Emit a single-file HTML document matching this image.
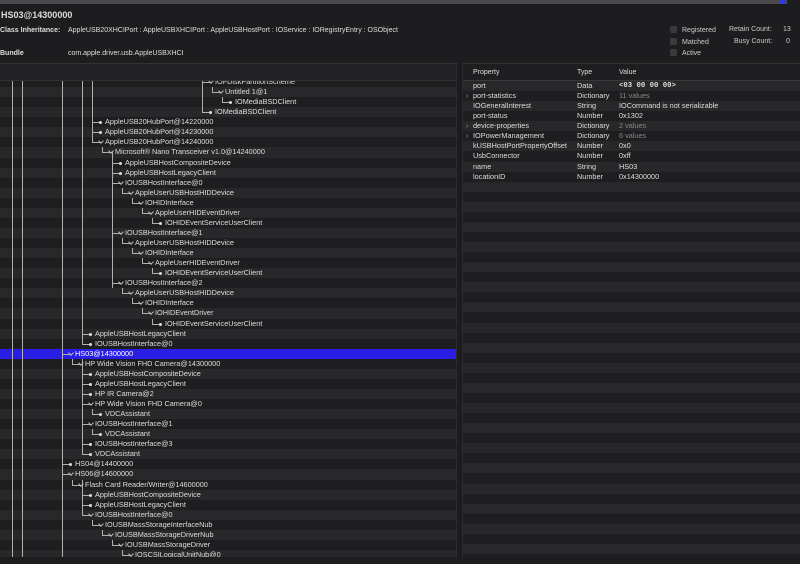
<!DOCTYPE html>
<html><head><meta charset="utf-8"><style>
*{margin:0;padding:0;box-sizing:border-box}
body{width:800px;height:557px;background:#1d1d1f;font-family:"Liberation Sans",sans-serif;color:#dedede;overflow:hidden;position:relative}
.top{position:absolute;left:0;top:0;width:787px;height:4px;background:#4a4a4c}
.top i{position:absolute;right:2px;top:0;width:6px;height:4px;background:#2a3ae8;border-radius:2px}
.h{position:absolute;font-size:9px;font-weight:bold;left:1px;top:10px}
.ci{position:absolute;font-size:7px;top:27px;left:0}
.ci b,.bu b{display:inline-block;width:68px}
.bu{position:absolute;font-size:7px;top:50px;left:0}
.st{position:absolute;font-size:7px;color:#ccc}
.cb{display:inline-block;width:7px;height:7px;background:#3a3a3c;border-radius:1px;margin-right:5px;vertical-align:-1px}
#left{position:absolute;left:0;top:63px;width:456px;height:494px;background:#222224;border-top:1px solid #333;overflow:hidden}
#lh{position:absolute;left:0;top:0;width:456px;height:17px;background:#222224;border-bottom:1px solid #333;z-index:2}
#tree{position:absolute;left:0;top:13px;width:456px}
.r{height:10.07px;line-height:10px;font-size:7.3px;position:relative;white-space:nowrap;padding-left:calc(75px + var(--d)*10px)}
.r:nth-child(odd){background:#1e1e20}
.r:nth-child(even){background:#28282a}
.r::before{content:"";position:absolute;left:calc(62px + var(--d)*10px);top:0;width:8px;height:5px;border-left:1px solid #b0b0b0;border-bottom:1px solid #b0b0b0}
.l::after{content:"";position:absolute;left:calc(69px + var(--d)*10px);top:4px;width:3px;height:3px;border-radius:50%;background:#ddd}
.e::after{content:"";position:absolute;left:calc(69px + var(--d)*10px);top:2px;width:3px;height:3px;border-right:1px solid #bbb;border-bottom:1px solid #bbb;transform:rotate(45deg)}
.r.sel{background:#2a1de6!important;color:#fff}
.v{position:absolute;width:1px;background:#b0b0b0}
#div{position:absolute;left:456px;top:63px;width:7px;height:494px;background:#1c1c1e;border-left:1px solid #2c2c2e;border-right:1px solid #2c2c2e}
#right{position:absolute;left:463px;top:63px;width:337px;height:494px;background:#1e1e20;border-top:1px solid #333}
.th{height:17px;font-size:7px;line-height:17px;position:relative;border-bottom:1px solid #3a3a3c;background:#1e1e20}
.th span,.pr span{position:absolute}
.pr{height:10.07px;line-height:10px;font-size:7.3px;position:relative}
.pr:nth-child(odd){background:#28282a}
.gr{color:#888}
</style></head><body>
<div class="top"><i></i></div>
<div class="h">HS03@14300000</div>
<div class="ci"><b>Class Inheritance:</b>AppleUSB20XHCIPort : AppleUSBXHCIPort : AppleUSBHostPort : IOService : IORegistryEntry : OSObject</div>
<div class="bu"><b>Bundle</b>com.apple.driver.usb.AppleUSBXHCI</div>
<div class="st" style="left:670px;top:26px"><span class="cb"></span>Registered</div>
<div class="st" style="left:670px;top:38px"><span class="cb"></span>Matched</div>
<div class="st" style="left:670px;top:49px"><span class="cb"></span>Active</div>
<div class="st" style="left:729px;top:26px">Retain Count:</div>
<div class="st" style="left:734px;top:38px">Busy Count:</div>
<div class="st" style="left:783px;top:26px">13</div>
<div class="st" style="left:786px;top:38px">0</div>

<div id="left">
<div id="lh"></div>
<div id="tree">
<div class="r e" style="--d:14">IOFDiskPartitionScheme</div>
<div class="r e" style="--d:15">Untitled 1@1</div>
<div class="r l" style="--d:16">IOMediaBSDClient</div>
<div class="r l" style="--d:14">IOMediaBSDClient</div>
<div class="r l" style="--d:3">AppleUSB20HubPort@14220000</div>
<div class="r l" style="--d:3">AppleUSB20HubPort@14230000</div>
<div class="r e" style="--d:3">AppleUSB20HubPort@14240000</div>
<div class="r e" style="--d:4">Microsoft® Nano Transceiver v1.0@14240000</div>
<div class="r l" style="--d:5">AppleUSBHostCompositeDevice</div>
<div class="r l" style="--d:5">AppleUSBHostLegacyClient</div>
<div class="r e" style="--d:5">IOUSBHostInterface@0</div>
<div class="r e" style="--d:6">AppleUserUSBHostHIDDevice</div>
<div class="r e" style="--d:7">IOHIDInterface</div>
<div class="r e" style="--d:8">AppleUserHIDEventDriver</div>
<div class="r l" style="--d:9">IOHIDEventServiceUserClient</div>
<div class="r e" style="--d:5">IOUSBHostInterface@1</div>
<div class="r e" style="--d:6">AppleUserUSBHostHIDDevice</div>
<div class="r e" style="--d:7">IOHIDInterface</div>
<div class="r e" style="--d:8">AppleUserHIDEventDriver</div>
<div class="r l" style="--d:9">IOHIDEventServiceUserClient</div>
<div class="r e" style="--d:5">IOUSBHostInterface@2</div>
<div class="r e" style="--d:6">AppleUserUSBHostHIDDevice</div>
<div class="r e" style="--d:7">IOHIDInterface</div>
<div class="r e" style="--d:8">IOHIDEventDriver</div>
<div class="r l" style="--d:9">IOHIDEventServiceUserClient</div>
<div class="r l" style="--d:2">AppleUSBHostLegacyClient</div>
<div class="r l" style="--d:2">IOUSBHostInterface@0</div>
<div class="r e sel" style="--d:0">HS03@14300000</div>
<div class="r e" style="--d:1">HP Wide Vision FHD Camera@14300000</div>
<div class="r l" style="--d:2">AppleUSBHostCompositeDevice</div>
<div class="r l" style="--d:2">AppleUSBHostLegacyClient</div>
<div class="r l" style="--d:2">HP IR Camera@2</div>
<div class="r e" style="--d:2">HP Wide Vision FHD Camera@0</div>
<div class="r l" style="--d:3">VDCAssistant</div>
<div class="r e" style="--d:2">IOUSBHostInterface@1</div>
<div class="r l" style="--d:3">VDCAssistant</div>
<div class="r l" style="--d:2">IOUSBHostInterface@3</div>
<div class="r l" style="--d:2">VDCAssistant</div>
<div class="r l" style="--d:0">HS04@14400000</div>
<div class="r e" style="--d:0">HS06@14600000</div>
<div class="r e" style="--d:1">Flash Card Reader/Writer@14600000</div>
<div class="r l" style="--d:2">AppleUSBHostCompositeDevice</div>
<div class="r l" style="--d:2">AppleUSBHostLegacyClient</div>
<div class="r e" style="--d:2">IOUSBHostInterface@0</div>
<div class="r e" style="--d:3">IOUSBMassStorageInterfaceNub</div>
<div class="r e" style="--d:4">IOUSBMassStorageDriverNub</div>
<div class="r e" style="--d:5">IOUSBMassStorageDriver</div>
<div class="r e" style="--d:6">IOSCSILogicalUnitNub@0</div>
<div class="r" style="--d:7"></div>
</div>
<div class="v" style="left:12px;top:17px;height:480px"></div>
<div class="v" style="left:22px;top:17px;height:480px"></div>
<div class="v" style="left:62px;top:17px;height:480px"></div>
<div class="v" style="left:82px;top:17px;height:263px"></div>
<div class="v" style="left:92px;top:17px;height:61px"></div>
<div class="v" style="left:112px;top:88px;height:136px"></div>
<div class="v" style="left:202px;top:17px;height:31px"></div>
<div class="v" style="left:82px;top:295px;height:90px"></div>
<div class="v" style="left:82px;top:416px;height:30px"></div>
</div>
<div id="div"></div>
<div id="right">
<div class="th"><span style="left:10px">Property</span><span style="left:114px">Type</span><span style="left:156px">Value</span></div>
<div>
<div class="pr"><span style="left:10px">port</span><span style="left:114px">Data</span><span style="left:156px;font-family:'Liberation Mono',monospace;font-weight:bold">&lt;03 00 00 00&gt;</span></div>
<div class="pr"><span style="left:3px;color:#999">›</span><span style="left:10px">port-statistics</span><span style="left:114px">Dictionary</span><span class="gr" style="left:156px">11 values</span></div>
<div class="pr"><span style="left:10px">IOGeneralInterest</span><span style="left:114px">String</span><span style="left:156px">IOCommand is not serializable</span></div>
<div class="pr"><span style="left:10px">port-status</span><span style="left:114px">Number</span><span style="left:156px">0x1302</span></div>
<div class="pr"><span style="left:3px;color:#999">›</span><span style="left:10px">device-properties</span><span style="left:114px">Dictionary</span><span class="gr" style="left:156px">2 values</span></div>
<div class="pr"><span style="left:3px;color:#999">›</span><span style="left:10px">IOPowerManagement</span><span style="left:114px">Dictionary</span><span class="gr" style="left:156px">6 values</span></div>
<div class="pr"><span style="left:10px">kUSBHostPortPropertyOffset</span><span style="left:114px">Number</span><span style="left:156px">0x0</span></div>
<div class="pr"><span style="left:10px">UsbConnector</span><span style="left:114px">Number</span><span style="left:156px">0xff</span></div>
<div class="pr"><span style="left:10px">name</span><span style="left:114px">String</span><span style="left:156px">HS03</span></div>
<div class="pr"><span style="left:10px">locationID</span><span style="left:114px">Number</span><span style="left:156px">0x14300000</span></div>
<div class="pr"></div><div class="pr"></div><div class="pr"></div><div class="pr"></div><div class="pr"></div><div class="pr"></div><div class="pr"></div><div class="pr"></div><div class="pr"></div><div class="pr"></div><div class="pr"></div><div class="pr"></div><div class="pr"></div><div class="pr"></div><div class="pr"></div><div class="pr"></div><div class="pr"></div><div class="pr"></div><div class="pr"></div><div class="pr"></div><div class="pr"></div><div class="pr"></div><div class="pr"></div><div class="pr"></div><div class="pr"></div><div class="pr"></div><div class="pr"></div><div class="pr"></div><div class="pr"></div><div class="pr"></div><div class="pr"></div><div class="pr"></div><div class="pr"></div><div class="pr"></div><div class="pr"></div><div class="pr"></div><div class="pr"></div><div class="pr"></div>
</div>
</div>
</body></html>
